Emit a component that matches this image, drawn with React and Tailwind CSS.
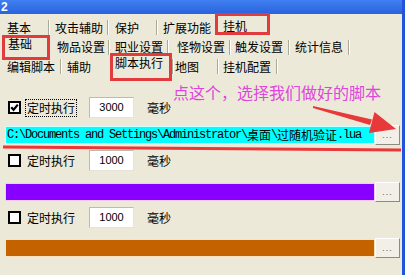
import React from 'react'

const row1 = [
  { label: '基本', cls: 'w-[48px] pl-[7px]', sep: true },
  { label: '攻击辅助', cls: 'w-[57px] pl-[5px]', sep: true },
  { label: '保护', cls: 'w-[47px] pl-[6px]', sep: true },
  { label: '扩展功能', cls: 'w-[57px] pl-[5px]' },
  { label: '挂机', cls: 'w-[55px] pl-[8px] pb-[3px]' },
]

const row2 = [
  { label: '基础', cls: 'w-[50px] pl-[8px] pb-[6px]' },
  { label: '物品设置', cls: 'w-[58px] pl-[7px]', sep: true },
  { label: '职业设置', cls: 'w-[57px] pl-[5px]', sep: true },
  { label: '怪物设置', cls: 'w-[60px] pl-[8px]', sep: true },
  { label: '触发设置', cls: 'w-[57px] pl-[4px]', sep: true },
  { label: '统计信息', cls: 'w-[58px] pl-[5px]', sep: true },
]

const row3 = [
  { label: '编辑脚本', cls: 'w-[60px] pl-[7px]', sep: true },
  { label: '辅助', cls: 'w-[48px] pl-[5px]' },
  { label: '脚本执行', cls: 'w-[62px] pl-[5px] pb-[7px]', sep: true },
  { label: '地图', cls: 'w-[43px] pl-[1px]', sep: true },
  { label: '挂机配置', cls: 'w-[57px] pl-[4px]', sep: true },
]

function Sep() {
  return <div className="h-[15px] w-[2px] border-l border-r border-l-[#aca899] border-r-white" />
}

function TabRow({ tabs, h }) {
  return (
    <div className={`flex items-center ${h}`}>
      {tabs.map((t) => (
        <React.Fragment key={t.label}>
          <div className={`flex h-full items-center leading-[12px] ${t.cls}`}>{t.label}</div>
          {t.sep && <Sep />}
        </React.Fragment>
      ))}
    </div>
  )
}

function Checkbox({ checked }) {
  return (
    <div className="flex h-[13px] w-[13px] items-center justify-center border-2 border-black bg-white">
      {checked && (
        <svg width="9" height="9" viewBox="0 0 9 9">
          <path d="M1.2 4.2 L3.6 6.8 L7.8 1.6" fill="none" stroke="black" strokeWidth="2.2" />
        </svg>
      )}
    </div>
  )
}

function TimerRow({ checked, value }) {
  return (
    <div className="flex h-[21px] items-center pl-[8px]">
      <Checkbox checked={checked} />
      <div
        className={`ml-[4px] flex h-[18px] items-center border px-[1px] leading-[12px] ${
          checked ? 'border-dotted border-black' : 'border-transparent'
        }`}
      >
        定时执行
      </div>
      <div className="ml-[12px] flex h-[21px] w-[45px] items-center justify-center border border-[#bdbbb0] border-b-[#e6e4da] border-r-[#e6e4da] bg-white font-['Liberation_Sans',sans-serif] text-[11px]">
        {value}
      </div>
      <span className="ml-[13px] leading-[12px]">毫秒</span>
    </div>
  )
}

function DotsButton() {
  return (
    <div className="flex h-[20px] w-[25px] items-end justify-center border border-b-[#8e8c80] border-l-white border-r-[#8e8c80] border-t-white bg-[#f1efe7] pb-[4px] font-['Liberation_Sans',sans-serif] text-[9px] leading-[9px] tracking-[1px] text-[#555]">
      ...
    </div>
  )
}

function BarRow({ color, mt, children }) {
  return (
    <div className={`flex h-[20px] items-center pl-[5px] ${mt}`}>
      <div className={`flex h-[18px] w-[370px] items-center overflow-hidden whitespace-nowrap border pl-[1px] ${color}`}>
        {children}
      </div>
      <DotsButton />
    </div>
  )
}

export default function App() {
  const mono = "font-['Liberation_Mono',monospace] text-[12px] tracking-[-1.2px]"
  return (
    <div className="relative flex h-[275px] w-[405px] overflow-hidden bg-[#ece9d8] font-['Noto_Sans_CJK_SC',sans-serif] text-[12px] text-black">
      <div className="flex w-[402px] flex-col">
        <div className="flex h-[14px] items-center bg-gradient-to-b from-[#3f80f0] to-[#2a62dc] pl-[1px] font-['Liberation_Sans',sans-serif] text-[12px] font-bold text-white">
          2
        </div>
        <div className="mt-[4px] flex flex-col">
          <TabRow tabs={row1} h="h-[19px]" />
          <TabRow tabs={row2} h="h-[20px]" />
          <TabRow tabs={row3} h="h-[19px]" />
        </div>

        <div className="mt-[21px] flex flex-col">
          <TimerRow checked value="3000" />
          <BarRow color="bg-[#00ffff] border-[#c8ffff]" mt="mt-[7px]">
            <span className={mono}>{'C:\\Documents and Settings\\Administrator\\'}</span>
            <span className="leading-[12px]">桌面</span>
            <span className={mono}>{'\\'}</span>
            <span className="leading-[12px]">过随机验证</span>
            <span className={mono}>.lua</span>
          </BarRow>
          <div className="mt-[5px]">
            <TimerRow value="1000" />
          </div>
          <BarRow color="bg-[#8800ff] border-[#f4c8f4]" mt="mt-[11px]" />
          <div className="mt-[5px]">
            <TimerRow value="1000" />
          </div>
          <BarRow color="bg-[#c46200] border-[#fde0c0]" mt="mt-[10px]" />
        </div>
      </div>
      <div className="h-full w-[3px] bg-[#2353d8]" />

      {/* annotations drawn over the screenshot */}
      <div className="absolute left-[215px] top-[13px] h-[22px] w-[55px] border-[3px] border-[#e23b3d]" />
      <div className="absolute left-[2px] top-[35px] h-[25px] w-[48px] border-[3px] border-[#e23b3d]" />
      <div className="absolute left-[110px] top-[53px] h-[28px] w-[62px] border-[3px] border-[#e23b3d]" />
      <div className="absolute left-[173px] top-[84px] text-[16px] leading-[16px] text-[#df45dc]">
        点这个，选择我们做好的脚本
      </div>
      <svg className="pointer-events-none absolute left-0 top-0" width="405" height="275" viewBox="0 0 405 275">
        <path d="M3 145.5 L401 148.5 L401 151.5 L3 148.5 Z" fill="#e8383a" />
        <path d="M313 106 L372 119.5 L370 125 L313 108 Z" fill="#e8383a" />
        <path d="M396 129 L374.5 112 L369 133 Z" fill="#e8383a" />
      </svg>
    </div>
  )
}
